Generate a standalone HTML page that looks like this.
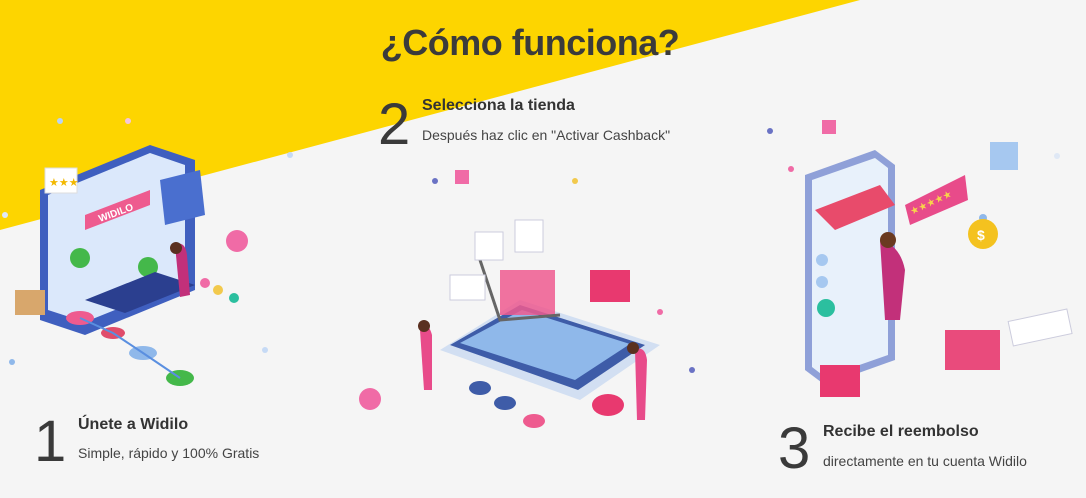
<!DOCTYPE html>
<html><head><meta charset="utf-8"><style>
html,body{margin:0;padding:0}
body{width:1086px;height:498px;background:#f5f5f5;position:relative;overflow:hidden;font-family:"Liberation Sans",sans-serif;color:#3c3c3c}
.abs{position:absolute}
h1{position:absolute;left:0;width:1060px;text-align:center;top:22px;margin:0;font-size:36px;font-weight:bold;color:#3b3b3b;letter-spacing:-0.5px}
.num{position:absolute;font-size:58px;font-weight:300;color:#3a3a3a;line-height:1}
.t{position:absolute;font-size:16px;font-weight:bold;color:#333;white-space:nowrap}
.s{position:absolute;font-size:14px;color:#444;white-space:nowrap}
</style></head><body>
<svg class="abs" style="left:0;top:0" width="1086" height="498">
<polygon points="0,0 860,0 0,230" fill="#fdd500"/>
<!-- dots -->
<circle cx="60" cy="121" r="3" fill="#b9d4f5"/><circle cx="5" cy="215" r="3" fill="#dfe8f5"/>
<circle cx="237" cy="241" r="11" fill="#f06ba6"/><circle cx="128" cy="121" r="3" fill="#f5c6dc"/>
<circle cx="290" cy="155" r="3" fill="#c6daf5"/><circle cx="12" cy="362" r="3" fill="#8fb8ea"/>
<circle cx="370" cy="399" r="11" fill="#f06ba6"/><circle cx="435" cy="181" r="3" fill="#6a72c4"/>
<circle cx="575" cy="181" r="3" fill="#f2c94c"/><circle cx="770" cy="131" r="3" fill="#6a72c4"/>
<circle cx="791" cy="169" r="3" fill="#f06ba6"/><circle cx="1057" cy="156" r="3" fill="#dfe8f5"/>
<circle cx="983" cy="218" r="4" fill="#8fb8ea"/><circle cx="692" cy="370" r="3" fill="#6a72c4"/>
<circle cx="660" cy="312" r="3" fill="#f06ba6"/><circle cx="265" cy="350" r="3" fill="#c6daf5"/>
<!-- left illustration -->
<g>
<polygon points="40,190 150,145 195,160 195,290 85,335 40,320" fill="#3f5fbf"/>
<polygon points="48,195 150,153 185,165 185,282 85,322 48,310" fill="#dbe8fb"/>
<polygon points="85,215 150,190 150,205 85,230" fill="#ee5b8f"/>
<text x="100" y="222" font-size="10" fill="#fff" font-weight="bold" transform="rotate(-20 100 222)">WIDILO</text>
<polygon points="160,180 200,170 205,215 165,225" fill="#4a6fcf"/>
<rect x="45" y="168" width="32" height="25" fill="#fff" stroke="#ddd"/>
<text x="49" y="186" font-size="11" fill="#f2b800">★★★</text>
<circle cx="80" cy="258" r="10" fill="#44b84a"/><circle cx="148" cy="267" r="10" fill="#44b84a"/>
<polygon points="85,300 155,272 195,285 125,313" fill="#2b3f8f"/>
<path d="M175 245 q10 -5 12 10 l3 40 -10 2 z" fill="#c2307a"/><circle cx="176" cy="248" r="6" fill="#5a3020"/>
<rect x="15" y="290" width="30" height="25" fill="#d8a76c"/>
<ellipse cx="80" cy="318" rx="14" ry="7" fill="#ee5b8f"/><ellipse cx="113" cy="333" rx="12" ry="6" fill="#e04c6b"/>
<ellipse cx="143" cy="353" rx="14" ry="7" fill="#8fb8ea"/><ellipse cx="180" cy="378" rx="14" ry="8" fill="#44b84a"/>
<circle cx="205" cy="283" r="5" fill="#f06ba6"/><circle cx="218" cy="290" r="5" fill="#f2c94c"/><circle cx="234" cy="298" r="5" fill="#2bbf9f"/>
<path d="M80 318 L113 333 L143 353 L180 378" stroke="#5a8fe0" stroke-width="2" fill="none"/>
</g>
<!-- center illustration -->
<g>
<polygon points="440,350 520,300 660,345 580,400" fill="#d2dff2"/>
<polygon points="450,345 520,305 645,345 578,390" fill="#3e5ca8"/>
<polygon points="460,343 522,310 630,344 575,380" fill="#8fb8ea"/>
<rect x="500" y="270" width="55" height="45" fill="#ee5b8f" opacity=".85"/>
<path d="M480 260 l20 60 60 -5" stroke="#666" stroke-width="3" fill="none"/>
<rect x="590" y="270" width="40" height="32" fill="#e8396f"/>
<rect x="450" y="275" width="35" height="25" fill="#fff" stroke="#ccd"/>
<rect x="475" y="232" width="28" height="28" fill="#fff" stroke="#ccd"/><rect x="515" y="220" width="28" height="32" fill="#fff" stroke="#ccd"/>
<rect x="455" y="170" width="14" height="14" fill="#f06ba6"/>
<path d="M420 330 q8 -10 12 5 l0 55 -8 0 z" fill="#e84b8a"/><circle cx="424" cy="326" r="6" fill="#5a3020"/>
<path d="M635 350 q10 -5 12 10 l-2 60 -8 0 z" fill="#e84b8a"/><circle cx="633" cy="348" r="6" fill="#5a3020"/>
<ellipse cx="608" cy="405" rx="16" ry="11" fill="#e8396f"/>
<ellipse cx="480" cy="388" rx="11" ry="7" fill="#3e5ca8"/><ellipse cx="505" cy="403" rx="11" ry="7" fill="#3e5ca8"/><ellipse cx="534" cy="421" rx="11" ry="7" fill="#ee5b8f"/>
</g>
<!-- right illustration -->
<g>
<polygon points="805,175 875,150 895,165 895,360 825,385 805,370" fill="#8fa0d8"/>
<polygon points="812,180 875,158 888,168 888,355 825,377 812,367" fill="#e8f1fb"/>
<polygon points="815,210 880,185 895,205 835,230" fill="#e84b6b"/>
<polygon points="905,205 965,175 968,200 910,225" fill="#e84b8a"/>
<text x="912" y="215" font-size="10" fill="#f8d54a" transform="rotate(-25 912 215)">★★★★★</text>
<rect x="990" y="142" width="28" height="28" fill="#a6c8f0"/>
<circle cx="983" cy="234" r="15" fill="#f4c21f"/><text x="977" y="240" font-size="14" fill="#fff" font-weight="bold">$</text>
<path d="M880 240 q20 5 25 30 l-5 50 -15 0 z" fill="#c2307a"/><circle cx="888" cy="240" r="8" fill="#6a3a20"/>
<rect x="820" y="365" width="40" height="32" fill="#e8396f"/>
<rect x="945" y="330" width="55" height="40" fill="#e8396f" opacity=".9"/>
<rect x="1010" y="315" width="60" height="25" fill="#fff" stroke="#ccd" transform="rotate(-12 1040 327)"/>
<rect x="822" y="120" width="14" height="14" fill="#f06ba6"/>
<circle cx="822" cy="260" r="6" fill="#a6c8f0"/><circle cx="822" cy="282" r="6" fill="#a6c8f0"/><circle cx="826" cy="308" r="9" fill="#2bbf9f"/>
</g>
</svg>
<h1>¿Cómo funciona?</h1>
<div class="num" style="left:378px;top:96px">2</div>
<div class="t" style="left:422px;top:97px">Selecciona la tienda</div>
<div class="s" style="left:422px;top:127px">Después haz clic en "Activar Cashback"</div>
<div class="num" style="left:34px;top:413px">1</div>
<div class="t" style="left:78px;top:416px">Únete a Widilo</div>
<div class="s" style="left:78px;top:445px">Simple, rápido y 100% Gratis</div>
<div class="num" style="left:778px;top:420px">3</div>
<div class="t" style="left:823px;top:423px">Recibe el reembolso</div>
<div class="s" style="left:823px;top:453px">directamente en tu cuenta Widilo</div>
</body></html>
